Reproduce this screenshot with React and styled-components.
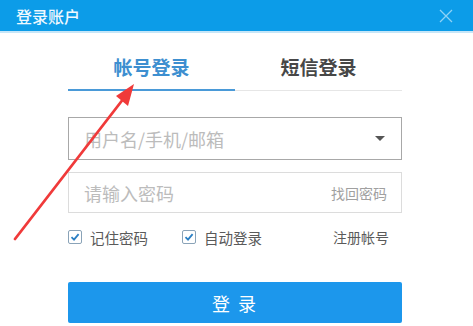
import React from "react";
import styled, { createGlobalStyle } from "styled-components";

const GlobalStyle = createGlobalStyle`
  html, body {
    margin: 0;
    padding: 0;
    background: #fff;
  }
  body {
    font-family: "Noto Sans CJK SC", "Noto Sans", sans-serif;
  }
`;

function Check() {
  return (
    <Box>
      <svg width="10" height="10" viewBox="0 0 10 10">
        <path d="M1.5 5.2 L4 7.6 L8.6 2.2" fill="none" stroke="#2a7fc4" strokeWidth="1.8" />
      </svg>
    </Box>
  );
}

function App() {
  return (
    <Window>
      <GlobalStyle />
      {/* header */}
      <TitleBar>
        <Title>登录账户</Title>
        <Close>
          <svg width="16" height="16" viewBox="0 0 16 16">
            <path d="M2 2 L14 14 M14 2 L2 14" stroke="#8fd2f6" strokeWidth="1.3" />
          </svg>
        </Close>
      </TitleBar>
      {/* body */}
      <Body>
        <Tabs>
          <Tab active>帐号登录</Tab>
          <Tab>短信登录</Tab>
        </Tabs>
        <Field strong>
          <Placeholder>用户名/手机/邮箱</Placeholder>
          <Caret />
        </Field>
        <Field>
          <Placeholder>请输入密码</Placeholder>
          <FieldLink>找回密码</FieldLink>
        </Field>
        <Options>
          <Option>
            <Check />
            记住密码
          </Option>
          <Option>
            <Check />
            自动登录
          </Option>
          <Register>注册帐号</Register>
        </Options>
        <LoginButton>登 录</LoginButton>
      </Body>
      {/* annotation arrow */}
      <Arrow width="473" height="326" viewBox="0 0 473 326">
        <path d="M15 239 L124 98" stroke="#f03a3a" strokeWidth="2.8" strokeLinecap="round" />
        <path d="M134 84 L128 106 L116 96 Z" fill="#f03a3a" />
      </Arrow>
    </Window>
  );
}

const Window = styled.div`
  position: relative;
  width: 473px;
  height: 326px;
  overflow: hidden;
  background: #fff;
`;

const TitleBar = styled.div`
  height: 31px;
  background: #0c9ce8;
  border-bottom: 2px solid #c6e6f8;
  display: flex;
  align-items: center;
  justify-content: space-between;
  padding: 0 19px 0 16px;
`;

const Title = styled.span`
  color: #eef8ff;
  font-size: 16px;
  font-weight: 500;
`;

const Close = styled.div`
  display: flex;
  align-items: center;
`;

const Body = styled.div`
  padding: 15px 71px 0 68px;
  display: flex;
  flex-direction: column;
`;

const Tabs = styled.div`
  display: grid;
  grid-template-columns: 1fr 1fr;
  height: 42px;
  border-bottom: 1px solid #e6e6e6;
  margin-bottom: 26px;
`;

const Tab = styled.div`
  display: flex;
  align-items: center;
  justify-content: center;
  padding-bottom: 4px;
  font-size: 19px;
  font-weight: 700;
  color: ${(p) => (p.active ? "#3d8fd0" : "#474747")};
  border-bottom: 2px solid ${(p) => (p.active ? "#4a9ad8" : "transparent")};
  margin-bottom: -1px;
`;

const Field = styled.div`
  height: ${(p) => (p.strong ? "41px" : "39px")};
  border: 1px solid ${(p) => (p.strong ? "#a8a8a8" : "#dcdcdc")};
  display: flex;
  align-items: center;
  justify-content: space-between;
  padding: 0 14px 0 15px;
  margin-bottom: 12px;
`;

const Placeholder = styled.span`
  font-size: 18px;
  color: #bcbcbc;
`;

const Caret = styled.span`
  width: 0;
  height: 0;
  border-left: 5px solid transparent;
  border-right: 5px solid transparent;
  border-top: 5px solid #555;
  margin-right: 2px;
`;

const FieldLink = styled.span`
  font-size: 14px;
  color: #a0a0a0;
`;

const Options = styled.div`
  display: flex;
  align-items: center;
  height: 22px;
  margin-top: 1px;
`;

const Option = styled.label`
  display: flex;
  align-items: center;
  gap: 8px;
  font-size: 14.5px;
  color: #5a5a5a;
  width: 114px;
`;

const Box = styled.span`
  width: 12px;
  height: 12px;
  border: 1px solid #8aa3b8;
  border-radius: 2px;
  display: flex;
  align-items: center;
  justify-content: center;
  background: #fff;
`;

const Register = styled.span`
  margin-left: auto;
  margin-right: 13px;
  font-size: 14px;
  color: #5a5a5a;
`;

const LoginButton = styled.button`
  margin-top: 34px;
  height: 41px;
  border: none;
  border-radius: 2px;
  background: #1c97ec;
  color: #fff;
  font-family: "Noto Sans CJK SC", "Noto Sans", sans-serif;
  font-size: 18px;
  letter-spacing: 2px;
`;

const Arrow = styled.svg`
  position: absolute;
  left: 0;
  top: 0;
  pointer-events: none;
`;

export default App;
